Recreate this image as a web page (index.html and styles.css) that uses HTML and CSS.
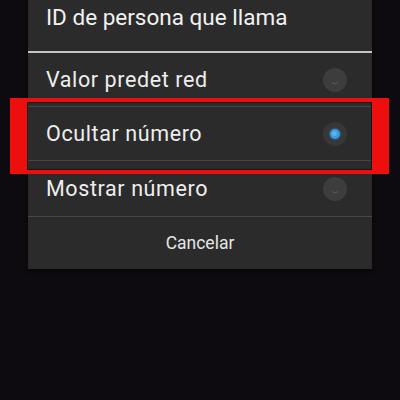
FILE: index.html
```html
<!DOCTYPE html>
<html lang="es">
<head>
    <meta charset="UTF-8">
    <meta name="viewport" content="width=device-width, initial-scale=1.0">
    <title>ID de persona que llama</title>
    <link rel="stylesheet" href="styles.css">
</head>
<body>
    <div class="dialog">
        <div class="dialog-title">ID de persona que llama</div>

        <!-- Options -->
        <div class="option">
            <span class="option-label">Valor predet red</span>
            <svg class="radio" width="26" height="26" viewBox="0 0 26 26">
                <circle cx="13" cy="13" r="12" fill="#3d3d3d"/>
                <path d="M10 15.5 q3 3 6 0" stroke="#5e5e5e" stroke-width="1" fill="none"/>
            </svg>
        </div>
        <div class="option highlighted">
            <span class="option-label">Ocultar número</span>
            <svg class="radio" width="26" height="26" viewBox="0 0 26 26">
                <circle cx="13" cy="13" r="12" fill="#373737"/>
                <circle cx="13" cy="13" r="6.5" fill="#2a5a7e" opacity="0.6"/>
                <circle cx="13" cy="13" r="5" fill="#3a9be0"/>
                <circle cx="12.5" cy="12.5" r="2.5" fill="#58b4f0"/>
            </svg>
            <div class="mark"></div>
        </div>
        <div class="option last">
            <span class="option-label">Mostrar número</span>
            <svg class="radio" width="26" height="26" viewBox="0 0 26 26">
                <circle cx="13" cy="13" r="12" fill="#3d3d3d"/>
                <path d="M10 15.5 q3 3 6 0" stroke="#5e5e5e" stroke-width="1" fill="none"/>
            </svg>
        </div>

        <button class="cancel">Cancelar</button>
    </div>
</body>
</html>
```

FILE: styles.css
```css
/* Main Styles */
body {
    background-color: #0e0b10;
    font-family: Roboto, "Noto Sans", sans-serif;
    margin: 0;
    height: 400px;
    overflow: hidden;
}
.dialog {
    background-color: #2b2b2b;
    width: 344px;
    margin: -16px 0 0 28px;
    box-shadow: 0 2px 3px rgba(0, 0, 0, 0.6);
}
.dialog-title {
    height: 67px;
    line-height: 67px;
    padding-left: 18px;
    font-size: 22.5px;
    color: #f2f2f2;
    border-bottom: 2px solid #c4c4c4;
}
.option {
    position: relative;
    display: flex;
    align-items: center;
    justify-content: space-between;
    height: 53px;
    padding: 0 24px 0 18px;
    border-bottom: 1px solid #464646;
}
.option.last {
    height: 55px;
}
.option-label {
    font-size: 21.5px;
    letter-spacing: 0.6px;
    color: #eeeeee;
}
.radio {
    display: block;
}
.mark {
    position: absolute;
    top: -9px;
    left: -18px;
    right: -17px;
    bottom: -14px;
    border-style: solid;
    border-color: #ec0f0d;
    border-width: 4px 17px 4px 17px;
    box-shadow: inset 0 0 0 1px #161616;
}
.cancel {
    display: block;
    width: 100%;
    height: 52px;
    background: none;
    border: none;
    font-family: Roboto, "Noto Sans", sans-serif;
    font-size: 17.5px;
    color: #e6e6e6;
    padding: 0;
}
```
